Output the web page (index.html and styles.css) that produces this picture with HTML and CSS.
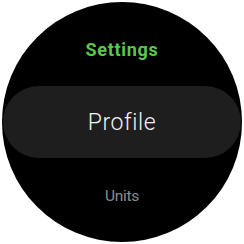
FILE: index.html
```html
<!DOCTYPE html>
<html>
<head>
<meta charset="utf-8">
<link rel="stylesheet" href="styles.css">
</head>
<body>
<div class="watch">
  <div class="title">Settings</div>
  <div class="item active">Profile</div>
  <div class="item next">Units</div>
</div>
</body>
</html>
```
FILE: styles.css
```css
html, body {
  margin: 0;
  padding: 0;
  background: #ffffff;
}
body {
  width: 244px;
  height: 244px;
  display: flex;
  align-items: center;
  justify-content: center;
  font-family: Roboto, "Noto Sans", sans-serif;
}
.watch {
  width: 240px;
  height: 240px;
  border-radius: 50%;
  background: #000000;
  overflow: hidden;
  display: flex;
  flex-direction: column;
  align-items: center;
}
.title {
  margin-top: 36px;
  height: 24px;
  line-height: 24px;
  font-size: 18px;
  font-weight: 700;
  color: #5cc74e;
  letter-spacing: 0.7px;
}
.item.active {
  margin-top: 24px;
  width: 238px;
  height: 72px;
  border-radius: 36px;
  background: #1e1e1e;
  color: #f2f2f2;
  font-size: 23px;
  font-weight: 300;
  letter-spacing: 0.6px;
  display: flex;
  align-items: center;
  justify-content: center;
}
.item.next {
  margin-top: 26px;
  font-size: 15.5px;
  line-height: 24px;
  color: #8c8c8c;
  font-weight: 400;
  letter-spacing: -0.3px;
}
```
